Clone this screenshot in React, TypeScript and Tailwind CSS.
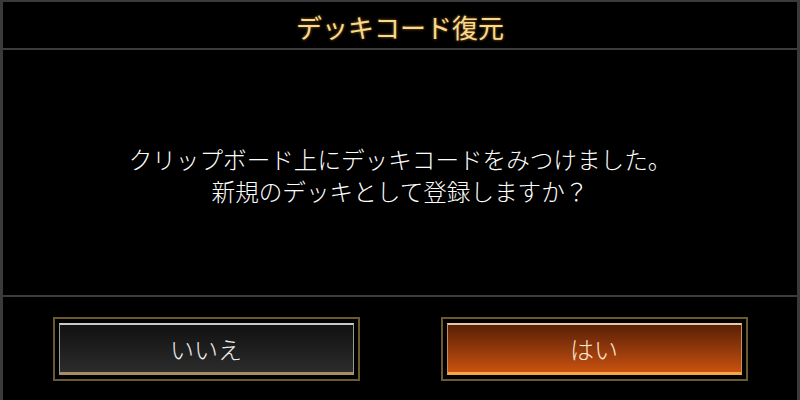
import React from 'react';

const font = { fontFamily: '"Noto Sans CJK JP", "Noto Sans", sans-serif' };

function GameButton({ label, variant }: { label: string; variant: 'no' | 'yes' }) {
  const isYes = variant === 'yes';
  return (
    <div className="h-[64px] w-[307px] border-2 border-[#6b5a2e] bg-black p-[4px] shadow-[0_0_4px_rgba(0,0,0,0.9)]">
      <button
        className={
          isYes
            ? 'flex h-full w-full items-center justify-center border-t-2 border-b-[3px] border-x border-t-[#e8c8a0] border-b-[#f3a847] border-x-[#c89060] bg-gradient-to-b from-[#5a2006] to-[#c9520f] text-[24px] font-light text-[#fbe6d2]'
            : 'flex h-full w-full items-center justify-center border-t-2 border-b-[3px] border-x border-t-[#c8c8c8] border-b-[#a88c68] border-x-[#9a9a9a] bg-gradient-to-b from-[#111111] to-[#2c2c2c] text-[24px] font-light text-[#ececec]'
        }
        style={font}
      >
        {label}
      </button>
    </div>
  );
}

export default function App() {
  return (
    <div className="flex h-[400px] w-[800px] flex-col border-x-[3px] border-t-[2px] border-[#3a3a3a] bg-black" style={font}>
      {/* header */}
      <div className="flex h-[48px] items-center justify-center border-b-2 border-[#3c3c3c]">
        <h1 className="pt-[4px] text-[26px] leading-none text-[#f7d98f] [text-shadow:0_0_3px_rgba(180,120,30,0.9)]">
          デッキコード復元
        </h1>
      </div>

      {/* message */}
      <div className="flex flex-1 flex-col items-center justify-center border-b-2 border-[#3c3c3c] pt-[4px] text-[23.6px] font-light leading-[32px] text-white">
        <p>クリップボード上にデッキコードをみつけました。</p>
        <p>新規のデッキとして登録しますか？</p>
      </div>

      {/* buttons */}
      <div className="flex h-[103px] justify-center gap-[81px] pt-[20px]">
        <GameButton label="いいえ" variant="no" />
        <GameButton label="はい" variant="yes" />
      </div>
    </div>
  );
}
